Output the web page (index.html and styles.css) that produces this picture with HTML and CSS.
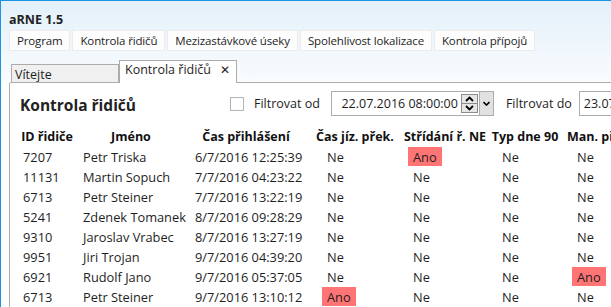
FILE: index.html
```html
<!DOCTYPE html>
<html lang="cs">
<head>
<meta charset="utf-8">
<title>aRNE 1.5</title>
<link rel="stylesheet" href="styles.css">
</head>
<body>
<div class="window">
  <div class="chrome">
    <div class="title">aRNE 1.5</div>
    <nav class="menu">
      <span class="menu-item">Program</span>
      <span class="menu-item">Kontrola řidičů</span>
      <span class="menu-item">Mezizastávkové úseky</span>
      <span class="menu-item">Spolehlivost lokalizace</span>
      <span class="menu-item">Kontrola přípojů</span>
    </nav>
    <div class="tabs">
      <div class="tab">Vítejte</div>
      <div class="tab active">Kontrola řidičů <span class="close">✕</span></div>
    </div>
  </div>
  <div class="panel">
    <div class="toolbar">
      <h1 class="heading">Kontrola řidičů</h1>
      <span class="checkbox"></span>
      <span class="label">Filtrovat od</span>
      <div class="datebox">
        <span class="datetext">22.07.2016 08:00:00</span>
        <span class="spin">
          <span class="spin-btn"><svg width="9" height="6" viewBox="0 0 9 6"><path d="M1 5 L4.5 1.5 L8 5" fill="none" stroke="#000" stroke-width="1.8"/></svg></span>
          <span class="spin-btn"><svg width="9" height="6" viewBox="0 0 9 6"><path d="M1 1 L4.5 4.5 L8 1" fill="none" stroke="#000" stroke-width="1.8"/></svg></span>
        </span>
        <span class="drop"><svg width="7" height="5" viewBox="0 0 7 5"><path d="M0.5 1 L3.5 4 L6.5 1" fill="none" stroke="#000" stroke-width="1.6"/></svg></span>
      </div>
      <span class="label label-do">Filtrovat do</span>
      <div class="datebox datebox-do">
        <span class="datetext">23.07.2016 08:00:00</span>
      </div>
    </div>
    <div class="grid">
      <div class="hd">ID řidiče</div>
      <div class="hd">Jméno</div>
      <div class="hd">Čas přihlášení</div>
      <div class="hd">Čas jíz. přek.</div>
      <div class="hd">Střídání ř. NE</div>
      <div class="hd">Typ dne 90</div>
      <div class="hd hd-last">Man. překr.</div>

      <div class="c c1">7207</div><div class="c c2">Petr Triska</div><div class="c c3">6/7/2016 12:25:39</div><div class="c c4">Ne</div><div class="c c5"><span class="yes">Ano</span></div><div class="c c6">Ne</div><div class="c c7">Ne</div>
      <div class="c c1">11131</div><div class="c c2">Martin Sopuch</div><div class="c c3">7/7/2016 04:23:22</div><div class="c c4">Ne</div><div class="c c5">Ne</div><div class="c c6">Ne</div><div class="c c7">Ne</div>
      <div class="c c1">6713</div><div class="c c2">Petr Steiner</div><div class="c c3">7/7/2016 13:22:19</div><div class="c c4">Ne</div><div class="c c5">Ne</div><div class="c c6">Ne</div><div class="c c7">Ne</div>
      <div class="c c1">5241</div><div class="c c2">Zdenek Tomanek</div><div class="c c3">8/7/2016 09:28:29</div><div class="c c4">Ne</div><div class="c c5">Ne</div><div class="c c6">Ne</div><div class="c c7">Ne</div>
      <div class="c c1">9310</div><div class="c c2">Jaroslav Vrabec</div><div class="c c3">8/7/2016 13:27:19</div><div class="c c4">Ne</div><div class="c c5">Ne</div><div class="c c6">Ne</div><div class="c c7">Ne</div>
      <div class="c c1">9951</div><div class="c c2">Jiri Trojan</div><div class="c c3">9/7/2016 04:39:20</div><div class="c c4">Ne</div><div class="c c5">Ne</div><div class="c c6">Ne</div><div class="c c7">Ne</div>
      <div class="c c1">6921</div><div class="c c2">Rudolf Jano</div><div class="c c3">9/7/2016 05:37:05</div><div class="c c4">Ne</div><div class="c c5">Ne</div><div class="c c6">Ne</div><div class="c c7"><span class="yes">Ano</span></div>
      <div class="c c1">6713</div><div class="c c2">Petr Steiner</div><div class="c c3">9/7/2016 13:10:12</div><div class="c c4"><span class="yes">Ano</span></div><div class="c c5">Ne</div><div class="c c6">Ne</div><div class="c c7">Ne</div>
    </div>
  </div>
</div>
</body>
</html>
```

FILE: styles.css
```css
* { box-sizing: border-box; }
html, body {
  margin: 0;
  padding: 0;
  width: 611px;
  height: 307px;
  overflow: hidden;
  background: #ffffff;
  font-family: "Open Sans", "Noto Sans", sans-serif;
  color: #1e1e1e;
}
.window {
  width: 700px;
  height: 307px;
  border-top: 1px solid #1c93e5;
  border-left: 1px solid #1c93e5;
  display: flex;
  flex-direction: column;
}
.chrome {
  background: linear-gradient(to bottom, #e3f0fa 0px, #eef6fc 40px, #fafcfe 82px);
}
.title {
  height: 29px;
  padding: 10px 0 0 8px;
  font-size: 12.5px;
  font-weight: 700;
  line-height: 17px;
  color: #222;
}
.menu {
  display: flex;
  gap: 2px;
  padding-left: 8px;
  height: 21px;
}
.menu-item {
  background: #fdfdfd;
  border: 1px solid #ececec;
  padding: 0 7px;
  font-size: 11.5px;
  letter-spacing: -0.15px;
  line-height: 19px;
  white-space: nowrap;
}
.tabs {
  display: flex;
  align-items: flex-end;
  height: 32px;
  margin-left: 9px;
  padding-left: 1px;
  border-bottom: 1px solid #acacac;
}
.tab {
  height: 18px;
  width: 108px;
  background: #f0f0f0;
  border: 1px solid #acacac;
  border-bottom: none;
  font-size: 12.5px;
  line-height: 19px;
  padding-left: 3px;
  white-space: nowrap;
}
.tab.active {
  height: 23px;
  width: 118px;
  margin-bottom: -1px;
  background: #ffffff;
  border-left: 1px solid #acacac;
  padding-left: 5px;
  line-height: 18px;
}
.close {
  margin-left: 6px;
  font-size: 12px;
}
.panel {
  flex: 1;
  margin-left: 8px;
  border-left: 1px solid #acacac;
  background: #ffffff;
}
.toolbar {
  display: flex;
  align-items: center;
  height: 25px;
  margin-top: 8px;
  padding-left: 10px;
  font-size: 12.5px;
}
.toolbar > * { flex-shrink: 0; }
.heading {
  margin: 0;
  width: 210px;
  font-size: 15.5px;
  font-weight: 700;
  color: #222;
  padding-top: 2px;
}
.checkbox {
  width: 14px;
  height: 14px;
  border: 1px solid #b4b4b4;
  background: #fff;
  margin-right: 10px;
}
.label {
  margin-right: 11px;
  white-space: nowrap;
}
.label-do {
  margin-left: 12px;
  margin-right: 7px;
}
.datebox {
  display: flex;
  height: 25px;
  width: 163px;
  border: 1px solid #acacac;
  background: #fff;
  align-items: stretch;
}
.datetext {
  flex: 1;
  text-align: right;
  padding-right: 3px;
  line-height: 23px;
  white-space: nowrap;
}
.spin {
  display: flex;
  flex-direction: column;
  justify-content: center;
  width: 17px;
  margin-right: 1px;
}
.spin-btn {
  height: 10px;
  border: 1px solid #8c8c8c;
  background: #e6e6e6;
  display: flex;
  align-items: center;
  justify-content: center;
}
.spin-btn + .spin-btn { margin-top: -1px; }
.drop {
  width: 14px;
  background: #e1e1e1;
  border-left: 1px solid #acacac;
  display: flex;
  align-items: center;
  justify-content: center;
}
.datebox-do {
  width: 140px;
  overflow: hidden;
}
.datebox-do .datetext {
  text-align: left;
  padding-left: 4px;
}
.grid {
  display: grid;
  grid-template-columns: 66px 102px 128px 90px 90px 70px 140px;
  grid-template-rows: 21px;
  grid-auto-rows: 20px;
  margin-top: 10px;
  margin-left: 4px;
  font-size: 12.8px;
}
.hd {
  font-weight: 700;
  font-size: 12.5px;
  text-align: center;
  line-height: 21px;
  color: #111;
  white-space: nowrap;
}
.hd-last {
  text-align: left;
  padding-left: 7px;
}
.c {
  line-height: 20px;
  white-space: nowrap;
}
.c1 { padding-left: 9px; }
.c2 { padding-left: 3px; }
.c3 { padding-left: 13px; }
.c4 { padding-left: 17px; }
.c5 { padding-left: 13px; }
.c6 { padding-left: 12px; }
.c7 { padding-left: 17px; }
.yes {
  background: #ff7474;
  padding: 1px 5px 0 5px;
  margin-left: -5px;
}
```
